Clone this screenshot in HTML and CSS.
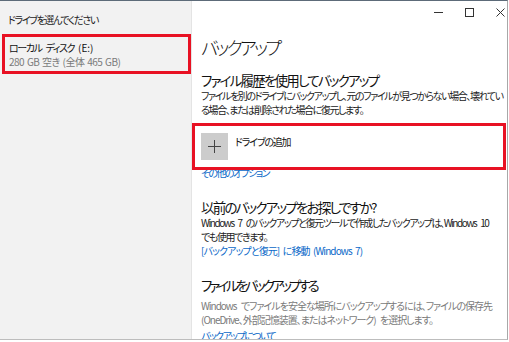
FILE: index.html
```html
<!DOCTYPE html>
<html lang="ja">
<head>
  <meta charset="UTF-8">
  <meta name="viewport" content="width=device-width, initial-scale=1.0">
  <title>バックアップ</title>
  <link rel="stylesheet" href="styles.css">
</head>
<body>
  <div class="window">
    <!-- ドライブ選択パネル -->
    <div class="sidebar">
      <p class="side-label">ドライブを選んでください</p>
      <div class="drive-item">
        <div class="drive-name">ローカル ディスク <span class="drive-letter">(E:)</span></div>
        <div class="drive-size">280 GB 空き (全体 465 GB)</div>
      </div>
    </div>

    <!-- 設定ページ -->
    <div class="main">
      <div class="titlebar">
        <span class="ctrl ctrl-min"></span>
        <span class="ctrl ctrl-max"></span>
        <span class="ctrl ctrl-close">
          <svg width="9" height="9" viewBox="0 0 9 9"><path d="M0.5 0.5 L8.5 8.5 M8.5 0.5 L0.5 8.5" stroke="#333" stroke-width="1" fill="none"/></svg>
        </span>
      </div>

      <h1 class="page-title">バックアップ</h1>

      <h2 class="section-title">ファイル履歴を使用してバックアップ</h2>
      <p class="text">ファイルを別のドライブにバックアップし、元のファイルが見つからない場合、壊れてい<br>る場合、または削除された場合に復元します。</p>
      <div class="add-drive">
        <div class="add-icon">
          <svg width="13" height="13" viewBox="0 0 13 13"><path d="M6.5 0 V13 M0 6.5 H13" stroke="#444" stroke-width="1" fill="none"/></svg>
        </div>
        <span class="add-label">ドライブの追加</span>
      </div>
      <a class="link link-options" href="#">その他のオプション</a>

      <h2 class="section-title gap">以前のバックアップをお探しですか?</h2>
      <p class="text">Windows 7 のバックアップと復元ツールで作成したバックアップは、Windows 10<br>でも使用できます。</p>
      <a class="link link-restore" href="#">[バックアップと復元] に移動 (Windows 7)</a>

      <h2 class="section-title gap tight">ファイルをバックアップする</h2>
      <p class="text muted">Windows でファイルを安全な場所にバックアップするには、ファイルの保存先<br>(OneDrive、外部記憶装置、またはネットワーク) を選択します。</p>
      <a class="link link-about" href="#">バックアップについて</a>
    </div>

    <!-- 注目枠 -->
    <div class="mark mark-drive"></div>
    <div class="mark mark-add"></div>
  </div>
</body>
</html>
```

FILE: styles.css
```css
body {
  margin: 0;
  padding: 0;
  background-color: white;
  font-family: "Noto Sans CJK JP", "Noto Sans", sans-serif;
  font-feature-settings: "palt";
  color: #1a1a1a;
}

.window {
  position: relative;
  width: 507px;
  height: 338px;
  display: flex;
  overflow: hidden;
  border-top: 1px solid #5d6b79;
  border-right: 1px solid #a8a8a8;
  border-bottom: 1px solid #bdbdbd;
  background-color: white;
}

.sidebar {
  width: 191px;
  flex-shrink: 0;
  background-color: #f2f2f2;
  border-right: 1px solid #e4e4e4;
  padding-top: 12px;
}

.side-label {
  margin: 0 0 0 8px;
  font-size: 10px;
  line-height: 14px;
  letter-spacing: -1.4px;
  color: #222;
}

.drive-item {
  margin-top: 14px;
  padding: 0 9px;
}

.drive-name {
  font-size: 10px;
  line-height: 14px;
  letter-spacing: -1.4px;
  word-spacing: 3px;
  color: #111;
}

.drive-letter {
  letter-spacing: 0;
}

.drive-size {
  font-size: 10px;
  line-height: 14px;
  letter-spacing: -0.5px;
  word-spacing: 1px;
  color: #7a7a7a;
}

.main {
  flex: 1;
  padding-left: 9px;
  padding-right: 2px;
}

.titlebar {
  height: 23px;
  display: flex;
  justify-content: flex-end;
  align-items: center;
  gap: 22px;
}

.ctrl {
  width: 9px;
  height: 9px;
  display: flex;
  align-items: center;
  justify-content: center;
}

.ctrl-min::before {
  content: "";
  width: 9px;
  border-top: 1px solid #333;
}

.ctrl-max::before {
  content: "";
  width: 7px;
  height: 7px;
  border: 1px solid #333;
}

.page-title {
  margin: 10px 0 0;
  font-size: 18px;
  font-weight: 300;
  line-height: 26px;
  letter-spacing: -2.8px;
  color: #111;
}

.section-title {
  margin: 11px 0 0;
  font-size: 13.5px;
  font-weight: 400;
  line-height: 18px;
  letter-spacing: -1.8px;
  color: #111;
}

.section-title.gap {
  margin-top: 18px;
}

.section-title.tight {
  letter-spacing: -3px;
}

.text {
  margin: 0;
  font-size: 10px;
  line-height: 14px;
  letter-spacing: -1.4px;
  word-spacing: 3px;
  white-space: nowrap;
  color: #222;
}

.text.muted {
  margin-top: 5px;
  letter-spacing: -1px;
  color: #7a7a7a;
}

.add-drive {
  margin-top: 16px;
  display: flex;
  align-items: flex-start;
  gap: 7px;
}

.add-icon {
  width: 27px;
  height: 27px;
  background-color: #cccccc;
  display: flex;
  align-items: center;
  justify-content: center;
}

.add-label {
  margin-top: 2px;
  font-size: 10px;
  line-height: 14px;
  letter-spacing: -1.2px;
  color: #111;
}

.link {
  display: block;
  font-size: 10px;
  line-height: 14px;
  letter-spacing: -1.6px;
  color: #0a68c8;
  text-decoration: none;
}

.link-options {
  margin-top: 6px;
}

.link-restore {
  letter-spacing: -0.9px;
  word-spacing: 2px;
}

.link-about {
  margin-top: 2px;
}

.mark {
  position: absolute;
  border: 3px solid #e81123;
  box-sizing: border-box;
}

.mark-drive {
  left: 2px;
  top: 33px;
  width: 189px;
  height: 40px;
}

.mark-add {
  left: 192px;
  top: 122px;
  width: 314px;
  height: 47px;
}
```
